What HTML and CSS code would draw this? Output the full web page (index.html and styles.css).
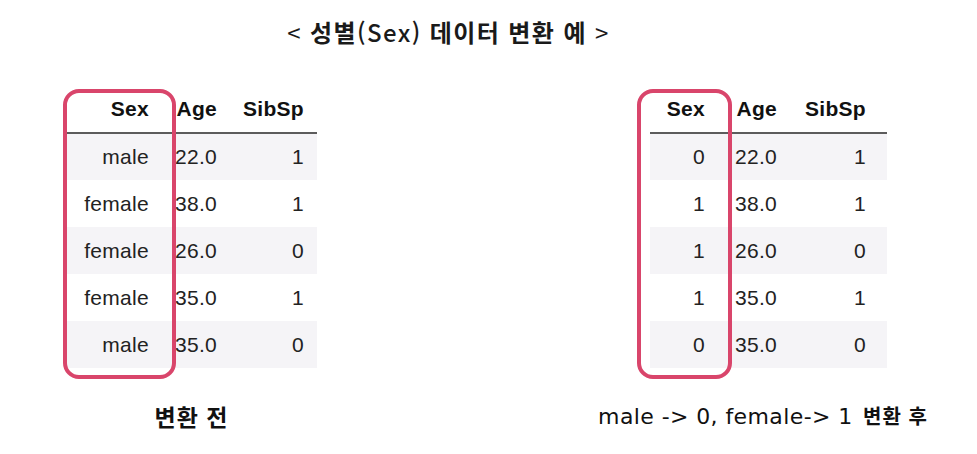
FILE: index.html
```html
<!DOCTYPE html>
<html lang="ko">
<head>
<meta charset="utf-8">
<title>성별 데이터 변환 예</title>
<link rel="stylesheet" href="styles.css">
</head>
<body>
<div class="page">
  <h1 class="title"><span class="thin">&lt;</span> 성별<span class="latin">(Sex)</span> 데이터 변환 예 <span class="thin">&gt;</span></h1>
  <div class="panels">
    <section class="panel">
      <div class="table-wrap">
        <table class="df df-left">
          <colgroup><col class="c1"><col class="c2"><col class="c3"></colgroup>
          <thead><tr><th>Sex</th><th>Age</th><th>SibSp</th></tr></thead>
          <tbody>
            <tr><td>male</td><td>22.0</td><td>1</td></tr>
            <tr><td>female</td><td>38.0</td><td>1</td></tr>
            <tr><td>female</td><td>26.0</td><td>0</td></tr>
            <tr><td>female</td><td>35.0</td><td>1</td></tr>
            <tr><td>male</td><td>35.0</td><td>0</td></tr>
          </tbody>
        </table>
        <div class="highlight hl-left"></div>
      </div>
      <p class="caption caption-left">변환 전</p>
    </section>
    <section class="panel">
      <div class="table-wrap">
        <table class="df df-right">
          <colgroup><col class="c1"><col class="c2"><col class="c3"></colgroup>
          <thead><tr><th>Sex</th><th>Age</th><th>SibSp</th></tr></thead>
          <tbody>
            <tr><td>0</td><td>22.0</td><td>1</td></tr>
            <tr><td>1</td><td>38.0</td><td>1</td></tr>
            <tr><td>1</td><td>26.0</td><td>0</td></tr>
            <tr><td>1</td><td>35.0</td><td>1</td></tr>
            <tr><td>0</td><td>35.0</td><td>0</td></tr>
          </tbody>
        </table>
        <div class="highlight hl-right"></div>
      </div>
      <p class="caption caption-right"><span class="latin">male -&gt; 0, female-&gt; 1</span> <span class="ko">변환 후</span></p>
    </section>
  </div>
</div>
</body>
</html>
```
FILE: styles.css
```css
* { box-sizing: border-box; }
html, body { margin: 0; padding: 0; background: #ffffff; }
body {
  width: 977px;
  height: 454px;
  overflow: hidden;
  font-family: "Noto Sans CJK KR", "Liberation Sans", sans-serif;
  color: #111;
}
.page { padding-top: 16px; }
.title {
  margin: 0;
  padding: 0 80px 0 0;
  text-align: center;
  font-size: 24px;
  line-height: 32px;
  font-weight: 700;
  color: #1a1a1a;
  letter-spacing: 1.4px;
}
.title .thin { font-weight: 400; }
.title .latin { font-weight: 500; }

.panels {
  display: grid;
  grid-template-columns: 252px 237px;
  column-gap: 333px;
  padding-left: 65px;
  margin-top: 37px;
}
.panel { display: flex; flex-direction: column; align-items: center; }
.table-wrap { position: relative; }

.df {
  border-collapse: collapse;
  table-layout: fixed;
  font-family: "Liberation Sans", Arial, sans-serif;
  font-size: 21px;
  letter-spacing: 0.3px;
  color: #222;
}
.df th, .df td {
  text-align: right;
  vertical-align: middle;
  padding: 0;
  white-space: nowrap;
}
.df th {
  height: 48px;
  font-weight: 700;
  color: #111;
  border-bottom: 2px solid #5c5c5c;
}
.df td { height: 47px; }
.df tbody tr:nth-child(odd) td { background: #f5f4f7; }

.df-left { width: 252px; }
.df-left .c1 { width: 95px; }
.df-left .c2 { width: 69px; }
.df-left .c3 { width: 88px; }
.df-left th:nth-child(1), .df-left td:nth-child(1) { padding-right: 11px; }
.df-left th:nth-child(2), .df-left td:nth-child(2) { padding-right: 12px; }
.df-left th:nth-child(3), .df-left td:nth-child(3) { padding-right: 13px; }

.df-right { width: 237px; }
.df-right .c1 { width: 66px; }
.df-right .c2 { width: 73px; }
.df-right .c3 { width: 98px; }
.df-right th:nth-child(1), .df-right td:nth-child(1) { padding-right: 11px; }
.df-right th:nth-child(2), .df-right td:nth-child(2) { padding-right: 12px; }
.df-right th:nth-child(3), .df-right td:nth-child(3) { padding-right: 21px; }

.highlight {
  position: absolute;
  top: 4px;
  height: 290px;
  border: 4px solid #d9456b;
  border-radius: 16px;
}
.hl-left { left: -2px; width: 113px; }
.hl-right { left: -13px; width: 95px; }

.caption {
  margin: 35px 0 0;
  line-height: 26px;
  white-space: nowrap;
  color: #111;
}
.caption-left {
  font-size: 23px;
  font-weight: 700;
  letter-spacing: 1px;
  padding-left: 1px;
}
.caption-right { margin-right: 11px; }
.caption-right .latin {
  font-family: "DejaVu Sans", "Liberation Sans", sans-serif;
  font-size: 22px;
  letter-spacing: 0.4px;
}
.caption-right .ko {
  margin-left: 6px;
  font-size: 20px;
  font-weight: 700;
  letter-spacing: 1px;
}
```
